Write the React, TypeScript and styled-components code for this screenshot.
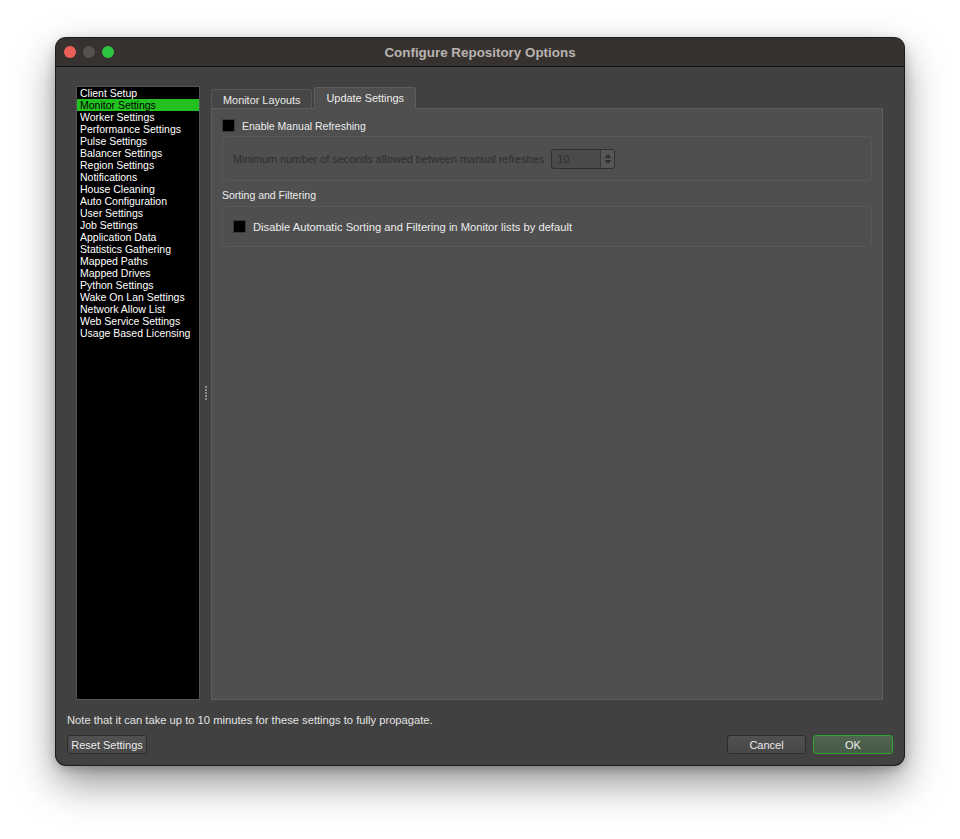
import { createGlobalStyle } from "styled-components";
import styled from "styled-components";

const GlobalStyle = createGlobalStyle`
    body {
        margin: 0;
        background: #ffffff;
        font-family: "Liberation Sans", Arial, sans-serif;
    }
`;

const Page = styled.div`
    height: 839px;
    padding: 38px 56px 0;
    box-sizing: border-box;
`;

const Window = styled.div`
    width: 848px;
    height: 727px;
    display: flex;
    flex-direction: column;
    background: #414141;
    border-radius: 10px;
    overflow: hidden;
    box-shadow: 0 0 0 1px #1c1c1c, 0 18px 40px rgba(0, 0, 0, 0.42),
        0 4px 12px rgba(0, 0, 0, 0.25);
`;

const TitleBar = styled.div`
    height: 28px;
    flex-shrink: 0;
    display: flex;
    align-items: center;
    position: relative;
    padding-left: 8px;
    gap: 7px;
    background: #37322f;
    border-bottom: 1px solid #161412;
`;

const Light = styled.span<{ $color: string }>`
    width: 12px;
    height: 12px;
    border-radius: 50%;
    background: ${(p) => p.$color};
`;

const Title = styled.div`
    position: absolute;
    left: 0;
    right: 0;
    text-align: center;
    color: #b7b4b2;
    font-size: 13.4px;
    font-weight: bold;
    pointer-events: none;
`;

const Body = styled.div`
    flex: 1;
    display: flex;
    flex-direction: column;
    padding: 19px 11px 11px 11px;
`;

const Main = styled.div`
    height: 614px;
    display: flex;
    padding: 0 10px 0 9px;
`;

const Sidebar = styled.ul`
    width: 124px;
    margin: 0;
    padding: 0;
    list-style: none;
    background: #000;
    border: 1px solid #555;
    box-sizing: border-box;
`;

const SideItem = styled.li<{ $selected?: boolean }>`
    height: 12px;
    line-height: 12px;
    padding-left: 3px;
    font-size: 10.5px;
    color: ${(p) => (p.$selected ? "#000" : "#fff")};
    background: ${(p) => (p.$selected ? "#22c11f" : "transparent")};
    white-space: nowrap;
`;

const Splitter = styled.div`
    width: 11px;
    display: flex;
    align-items: center;
    justify-content: center;
`;

const TabWidget = styled.div`
    flex: 1;
    display: flex;
    flex-direction: column;
`;

const TabBar = styled.div`
    height: 23px;
    display: flex;
    align-items: flex-end;
    gap: 2px;
    margin-bottom: -1px;
    position: relative;
    z-index: 1;
`;

const Tab = styled.div<{ $active?: boolean }>`
    height: ${(p) => (p.$active ? 22 : 20)}px;
    box-sizing: border-box;
    padding: 4px 11px 0;
    font-size: 10.9px;
    color: #ececec;
    background: ${(p) => (p.$active ? "#4f4f4f" : "#464646")};
    border: 1px solid ${(p) => (p.$active ? "#5e5e5e" : "#575757")};
    border-bottom: ${(p) => (p.$active ? "none" : "1px solid #5e5e5e")};
    border-radius: 3px 3px 0 0;
    white-space: nowrap;
`;

const Pane = styled.div`
    flex: 1;
    background: #4f4f4f;
    border: 1px solid #5e5e5e;
    padding: 10px 10px;
    display: flex;
    flex-direction: column;
`;

const CheckRow = styled.label<{ $size?: number }>`
    display: flex;
    align-items: center;
    gap: 7px;
    height: 13px;
    font-size: ${(p) => p.$size ?? 10.5}px;
    color: #ececec;
    white-space: nowrap;
`;

const Box = styled.span`
    width: 13px;
    height: 13px;
    box-sizing: border-box;
    background: #000;
    border: 1px solid #3a3a3a;
    flex-shrink: 0;
`;

const Group = styled.div<{ $height: number }>`
    height: ${(p) => p.$height}px;
    box-sizing: border-box;
    border: 1px solid #585858;
    border-radius: 3px;
    padding: 0 10px;
    display: flex;
    align-items: center;
    gap: 7px;
`;

const DisabledText = styled.span`
    font-size: 10.9px;
    color: #2e2e2e;
    white-space: nowrap;
`;

const Spin = styled.div`
    width: 64px;
    height: 20px;
    box-sizing: border-box;
    display: flex;
    border: 1px solid #2f2f2f;
    border-radius: 3px;
    background: #4a4a4a;
    overflow: hidden;
`;

const SpinValue = styled.span`
    flex: 1;
    padding-left: 5px;
    line-height: 18px;
    font-size: 11px;
    color: #2e2e2e;
`;

const SpinArrows = styled.span`
    width: 13px;
    border-left: 1px solid #3a3a3a;
    background: #575757;
    display: flex;
    align-items: center;
    justify-content: center;
`;

const SectionLabel = styled.div`
    font-size: 10.5px;
    color: #ececec;
    height: 13px;
    line-height: 13px;
    margin: 8px 0 4px;
`;

const Note = styled.div`
    margin-top: 14px;
    height: 13px;
    line-height: 13px;
    font-size: 11.2px;
    color: #e4e4e4;
`;

const Buttons = styled.div`
    margin-top: 8px;
    display: flex;
    gap: 7px;
`;

const Spacer = styled.div`
    flex: 1;
`;

const Button = styled.button<{ $default?: boolean; $width: number }>`
    width: ${(p) => p.$width}px;
    height: 19px;
    padding: 0;
    font-family: inherit;
    font-size: 11px;
    color: #ececec;
    border-radius: 3px;
    border: 1px solid ${(p) => (p.$default ? "#2ea62c" : "#2c2c2c")};
    background: ${(p) =>
        p.$default
            ? "linear-gradient(#506550, #475847)"
            : "linear-gradient(#515151, #474747)"};
`;

const sections = [
    "Client Setup",
    "Monitor Settings",
    "Worker Settings",
    "Performance Settings",
    "Pulse Settings",
    "Balancer Settings",
    "Region Settings",
    "Notifications",
    "House Cleaning",
    "Auto Configuration",
    "User Settings",
    "Job Settings",
    "Application Data",
    "Statistics Gathering",
    "Mapped Paths",
    "Mapped Drives",
    "Python Settings",
    "Wake On Lan Settings",
    "Network Allow List",
    "Web Service Settings",
    "Usage Based Licensing",
];

const App = () => {
    return (
        <Page>
            <GlobalStyle />
            <Window>
                <TitleBar>
                    <Light $color="#ec5f57" />
                    <Light $color="#57524f" />
                    <Light $color="#2bc53f" />
                    <Title>Configure Repository Options</Title>
                </TitleBar>
                <Body>
                    <Main>
                        <Sidebar>
                            {sections.map((s) => (
                                <SideItem key={s} $selected={s === "Monitor Settings"}>
                                    {s}
                                </SideItem>
                            ))}
                        </Sidebar>
                        <Splitter>
                            <svg width="4" height="15" viewBox="0 0 4 15">
                                {[0, 3, 6, 9, 12].map((y) => (
                                    <rect key={y} x="1" y={y} width="2" height="2" fill="#8a8a8a" />
                                ))}
                            </svg>
                        </Splitter>
                        <TabWidget>
                            <TabBar>
                                <Tab>Monitor Layouts</Tab>
                                <Tab $active>Update Settings</Tab>
                            </TabBar>
                            <Pane>
                                <CheckRow>
                                    <Box />
                                    Enable Manual Refreshing
                                </CheckRow>
                                <Group $height={45} style={{ marginTop: 4 }}>
                                    <DisabledText>
                                        Minimum number of seconds allowed between manual refreshes
                                    </DisabledText>
                                    <Spin>
                                        <SpinValue>10</SpinValue>
                                        <SpinArrows>
                                            <svg width="8" height="12" viewBox="0 0 8 12">
                                                <path d="M4 1 L7.5 5 L0.5 5 Z" fill="#2e2e2e" />
                                                <path d="M4 11 L7.5 7 L0.5 7 Z" fill="#2e2e2e" />
                                            </svg>
                                        </SpinArrows>
                                    </Spin>
                                </Group>
                                <SectionLabel>Sorting and Filtering</SectionLabel>
                                <Group $height={41}>
                                    <CheckRow $size={11.2}>
                                        <Box />
                                        Disable Automatic Sorting and Filtering in Monitor lists by default
                                    </CheckRow>
                                </Group>
                            </Pane>
                        </TabWidget>
                    </Main>
                    <Note>Note that it can take up to 10 minutes for these settings to fully propagate.</Note>
                    <Buttons>
                        <Button $width={80}>Reset Settings</Button>
                        <Spacer />
                        <Button $width={79}>Cancel</Button>
                        <Button $width={80} $default>
                            OK
                        </Button>
                    </Buttons>
                </Body>
            </Window>
        </Page>
    );
};

export default App;
